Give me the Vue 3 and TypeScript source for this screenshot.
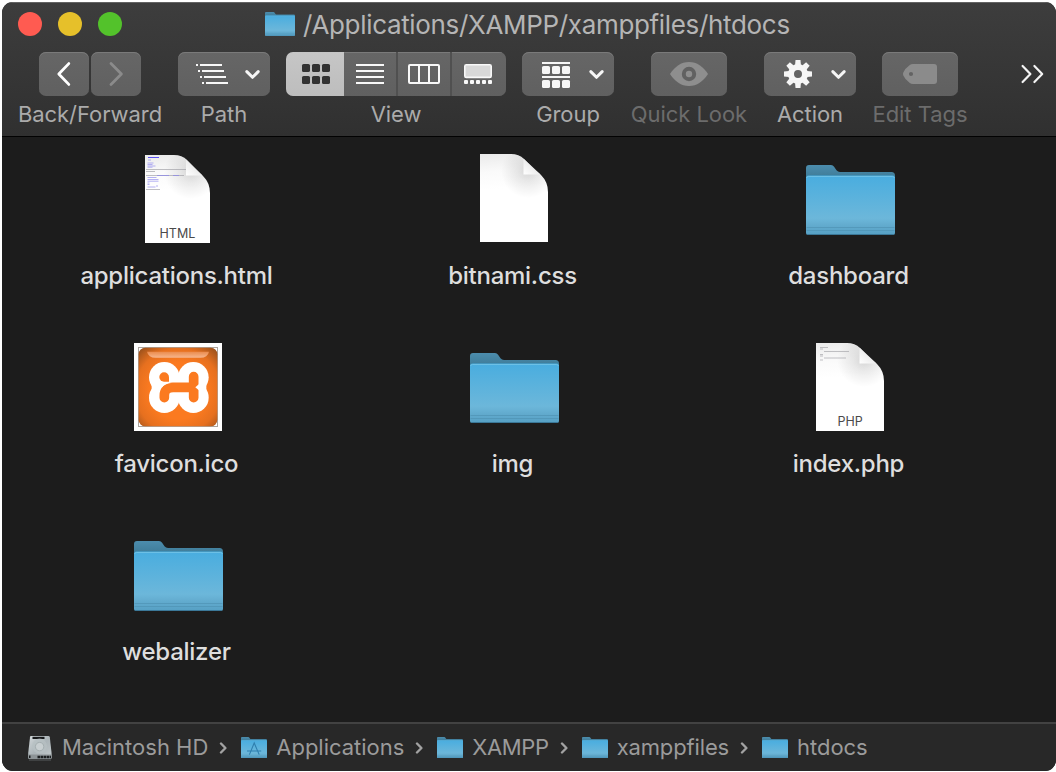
<script setup lang="ts">
import { h, type FunctionalComponent } from 'vue'

interface Entry { name: string; kind: 'html' | 'css' | 'php' | 'folder' | 'ico' }
interface Crumb { name: string; icon: 'disk' | 'apps' | 'folder'; cls: string }

const entries: Entry[] = [
  { name: 'applications.html', kind: 'html' },
  { name: 'bitnami.css', kind: 'css' },
  { name: 'dashboard', kind: 'folder' },
  { name: 'favicon.ico', kind: 'ico' },
  { name: 'img', kind: 'folder' },
  { name: 'index.php', kind: 'php' },
  { name: 'webalizer', kind: 'folder' },
]

const crumbs: Crumb[] = [
  { name: 'Macintosh HD', icon: 'disk', cls: 'c-disk' },
  { name: 'Applications', icon: 'apps', cls: 'c-apps' },
  { name: 'XAMPP', icon: 'folder', cls: 'c-xampp' },
  { name: 'xamppfiles', icon: 'folder', cls: 'c-files' },
  { name: 'htdocs', icon: 'folder', cls: 'c-htdocs' },
]

const teeth = [0, 45, 90, 135, 180, 225, 270, 315]

const Chevron: FunctionalComponent = () =>
  h('path', {
    d: 'M68.8 19.6L74.5 25.3L80.2 19.6',
    fill: 'none',
    stroke: '#f6f6f6',
    'stroke-width': 3,
    'stroke-linecap': 'round',
    'stroke-linejoin': 'round',
  })
</script>

<template>
  <div class="window">
    <svg class="defs" width="0" height="0">
      <defs>
        <linearGradient id="front" x1="0" y1="0" x2="0" y2="1">
          <stop offset="0" stop-color="#49addf" />
          <stop offset="0.72" stop-color="#6cb7da" />
          <stop offset="0.84" stop-color="#62abce" />
          <stop offset="1" stop-color="#56a0c4" />
        </linearGradient>
        <linearGradient id="back" x1="0" y1="0" x2="0" y2="1">
          <stop offset="0" stop-color="#4c8dad" />
          <stop offset="0.6" stop-color="#3f7c99" />
        </linearGradient>
        <linearGradient id="sheet" x1="0.2" y1="0" x2="0.25" y2="1">
          <stop offset="0" stop-color="#ebebeb" />
          <stop offset="0.2" stop-color="#fafafa" />
          <stop offset="0.4" stop-color="#ffffff" />
        </linearGradient>
        <radialGradient id="shade" gradientUnits="userSpaceOnUse" cx="48" cy="17" r="27">
          <stop offset="0" stop-color="#000" stop-opacity="0.15" />
          <stop offset="0.4" stop-color="#000" stop-opacity="0.08" />
          <stop offset="1" stop-color="#000" stop-opacity="0" />
        </radialGradient>
        <linearGradient id="curl" x1="0" y1="1" x2="0.6" y2="0.4">
          <stop offset="0" stop-color="#ffffff" />
          <stop offset="1" stop-color="#e9e9e9" />
        </linearGradient>
        <radialGradient id="tile" cx="0.5" cy="0.55" r="0.72">
          <stop offset="0.5" stop-color="#fb7a20" />
          <stop offset="0.75" stop-color="#e6701f" />
          <stop offset="1" stop-color="#98501c" />
        </radialGradient>
        <linearGradient id="gloss" x1="0" y1="0" x2="0" y2="1">
          <stop offset="0" stop-color="#eb8b4c" />
          <stop offset="1" stop-color="#f6b58c" />
        </linearGradient>
        <linearGradient id="metal" x1="0" y1="0" x2="1" y2="1">
          <stop offset="0" stop-color="#d2d8da" />
          <stop offset="0.5" stop-color="#abb4b8" />
          <stop offset="1" stop-color="#c3cacc" />
        </linearGradient>
        <symbol id="folder" viewBox="0.5 0.5 89 70" preserveAspectRatio="none">
          <path d="M0.5 12V3.5Q0.5 0.5 3.5 0.5H25.5Q27.5 0.5 28.6 2.2L31 5.8Q32.3 7.5 34.5 7.5H86Q89.5 7.5 89.5 11V20H0.5Z" fill="url(#back)" />
          <path d="M0.5 13.5Q0.5 11 3 11H87Q89.5 11 89.5 13.5V68.5Q89.5 70.5 87.5 70.5H2.5Q0.5 70.5 0.5 68.5Z" fill="url(#front)" />
          <path d="M1.2 13.5Q1.2 12 3 12H87Q88.8 12 88.8 13.5" fill="none" stroke="#6cc0e6" stroke-width="1" />
          <path d="M1 63H89M1 66H89" stroke="#4f93b4" stroke-width="1" opacity="0.7" />
          <path d="M1.5 70H88.5" stroke="#3b7898" stroke-width="1" />
        </symbol>
      </defs>
    </svg>

    <header class="header">
      <div class="titlebar">
        <div class="lights"><i class="red" /><i class="yellow" /><i class="green" /></div>
        <div class="title">
          <svg width="30" height="24"><use href="#folder" width="30" height="24" /></svg>
          <span>/Applications/XAMPP/xamppfiles/htdocs</span>
        </div>
      </div>

      <div class="toolbar">
        <div class="tool w-nav">
          <div class="pair">
            <button class="btn">
              <svg width="50" height="44"><path d="M29.8 11.6L19.8 22L29.8 32.4" class="nav" /></svg>
            </button>
            <button class="btn">
              <svg width="50" height="44"><path d="M20 11.6L30.4 22L20 32.4" class="nav off" /></svg>
            </button>
          </div>
          <span>Back/Forward</span>
        </div>

        <div class="tool w-menu">
          <button class="btn">
            <svg width="92" height="44">
              <path d="M18 13h2M22 13h22M20 19h2M24 19h22M22 25h2M26 25h22M24 31h2M28 31h22" stroke="#f8f8f8" stroke-width="2" />
              <Chevron />
            </svg>
          </button>
          <span>Path</span>
        </div>

        <div class="tool w-view">
          <div class="segments">
            <button class="seg selected">
              <svg width="58" height="44" fill="#333">
                <rect v-for="n in 6" :key="n" :x="16 + ((n - 1) % 3) * 10" :y="n > 3 ? 24 : 12" width="8" height="8" rx="1.6" />
              </svg>
            </button>
            <button class="seg">
              <svg width="52" height="44"><path d="M12 13h28M12 19h28M12 25h28M12 31h28" stroke="#f8f8f8" stroke-width="2" /></svg>
            </button>
            <button class="seg">
              <svg width="52" height="44">
                <rect x="11" y="13" width="30" height="18" rx="1" fill="none" stroke="#f8f8f8" stroke-width="2" />
                <path d="M21 13v18M31 13v18" stroke="#f8f8f8" stroke-width="2" />
              </svg>
            </button>
            <button class="seg">
              <svg width="54" height="44" fill="#f8f8f8">
                <rect x="12.8" y="12.8" width="26.4" height="12.6" rx="1.5" fill="#d8d8d8" stroke="#f8f8f8" stroke-width="1.6" />
                <rect v-for="n in 5" :key="n" :x="6 + n * 6" y="28" width="4" height="4" rx="1" />
              </svg>
            </button>
          </div>
          <span>View</span>
        </div>

        <div class="tool w-menu">
          <button class="btn">
            <svg width="92" height="44" fill="#f6f6f6">
              <rect x="20" y="10" width="28" height="2" />
              <rect v-for="n in 6" :key="n" :x="20 + ((n - 1) % 3) * 10" :y="n > 3 ? 28 : 14" width="8" height="8" rx="1.6" />
              <rect x="20" y="24" width="28" height="2" />
              <Chevron />
            </svg>
          </button>
          <span>Group</span>
        </div>

        <div class="tool w-look dim">
          <button class="btn">
            <svg width="76" height="44">
              <path d="M19 22C24 14.5 30 10 38 10S52 14.5 57 22C52 29.5 46 34 38 34S24 29.5 19 22Z" fill="#8e8e8e" />
              <circle cx="38" cy="22" r="5.2" fill="none" stroke="#616161" stroke-width="4" />
            </svg>
          </button>
          <span>Quick Look</span>
        </div>

        <div class="tool w-menu">
          <button class="btn">
            <svg width="92" height="44">
              <g transform="translate(34 22)" fill="#f6f6f6">
                <circle r="7" fill="none" stroke="#f6f6f6" stroke-width="6" />
                <path v-for="a in teeth" :key="a" :transform="`rotate(${a})`" d="M-2.9 -9L-2.5 -14H2.5L2.9 -9Z" />
              </g>
              <Chevron />
            </svg>
          </button>
          <span>Action</span>
        </div>

        <div class="tool w-tags dim">
          <button class="btn">
            <svg width="76" height="44">
              <path fill-rule="evenodd" d="M31 12H52Q55 12 55 15V29Q55 32 52 32H31Q29 32 27.5 30.8Q23 27.5 21.3 23.6Q20.7 22 21.3 20.4Q23 16.5 27.5 13.2Q29 12 31 12ZM29 19.9A2.1 2.1 0 1 0 29 24.1A2.1 2.1 0 1 0 29 19.9Z" fill="#8b8b8b" />
            </svg>
          </button>
          <span>Edit Tags</span>
        </div>

        <svg class="more" width="26" height="44">
          <path d="M3.6 14L11.4 22L3.6 30M15.4 14L23.2 22L15.4 30" fill="none" stroke="#f4f4f4" stroke-width="2.2" stroke-linecap="round" stroke-linejoin="round" />
        </svg>
      </div>
    </header>

    <main class="files">
      <div v-for="e in entries" :key="e.name" class="file">
        <div class="art" :class="e.kind">
          <svg v-if="e.kind === 'folder'" width="89" height="70"><use href="#folder" width="89" height="70" /></svg>

          <svg v-else-if="e.kind === 'ico'" width="88" height="88" viewBox="27 24 264 264">
            <rect x="27" y="24" width="264" height="264" fill="#fff" />
            <rect x="39" y="36" width="240" height="240" fill="#aaa49e" />
            <path d="M42 39H58Q46 42 42 56ZM276 39H260Q272 42 276 56ZM42 273H58Q46 270 42 258ZM276 273H260Q272 270 276 258Z" fill="#fff" />
            <rect x="41" y="38" width="236" height="236" rx="20" fill="url(#tile)" />
            <path d="M66 50H252Q248 68 226 68H92Q70 68 66 50Z" fill="url(#gloss)" />
            <g fill="#fff">
              <circle cx="118" cy="127" r="46" />
              <circle cx="205" cy="127" r="46" />
              <circle cx="118" cy="188" r="46" />
              <circle cx="205" cy="188" r="46" />
              <rect x="80" y="124" width="164" height="66" />
            </g>
            <path d="M118 188V182Q118 158 144 157H206M206 125V188" fill="none" stroke="#fb7a20" stroke-width="29" stroke-linecap="round" />
            <path d="M117 112A15 15 0 0 1 132 127V140H117A14 14 0 0 1 117 112Z" fill="#fb7a20" />
            <path d="M104 146Q112 142 132 142L138 144Q120 146 110 158Z" fill="#fff" />
            <path d="M225 145L211 157L225 169Z" fill="#fff" />
          </svg>

          <svg v-else-if="e.kind === 'html'" width="65" height="88">
            <path d="M0 0H29Q37 0 42 5L58 21Q65 28 65 38V88H0Z" fill="url(#sheet)" />
            <path d="M2 0H31Q39 0 44 5L60 21Q67 28 67 38V88H2Z" fill="url(#shade)" transform="translate(-2 0)" />
            <path d="M41 4.5V20.5H57.5Q54 17.5 50 13.5Z" fill="url(#curl)" />
            <path d="M3 2.5h11" stroke="#5c52f0" stroke-width="1.2" />
            <path d="M3 5h3M2.5 8h6M2.5 9.5h5M2.5 11h8M2.5 12.2h5M2.5 22.5h9M2.5 24.5h11M2.5 26.2h11M2.5 28h2M2.5 29.5h2M2.5 32h8M11 31h2" stroke="#a19df0" stroke-width="0.8" />
            <path d="M1 14.5h40M1 16.5h9M1 20.5h38M1 34.5h14" stroke="#a2a2a8" stroke-width="0.7" />
            <path d="M12 20.5h12M28 20.5h6" stroke="#8884e8" stroke-width="0.7" />
            <text x="32.4" y="83" class="ext">HTML</text>
          </svg>

          <svg v-else width="68" height="88">
            <path d="M0 0H31Q39 0 44 5L61 21Q68 28 68 38V88H0Z" fill="url(#sheet)" />
            <path d="M0 0H31Q39 0 44 5L61 21Q68 28 68 38V88H0Z" fill="url(#shade)" />
            <path d="M43.5 4.5V20.5H60.5Q56 17 52 13Z" fill="url(#curl)" />
            <template v-if="e.kind === 'php'">
              <path d="M4 4.5h8M4 6h3M8 8.5h25M4 11.5h3M4 13h3M8 15h22M4 17h3" stroke="#a8a8ac" stroke-width="0.7" />
              <text x="34.2" y="83" class="ext">PHP</text>
            </template>
          </svg>
        </div>
        <span class="name">{{ e.name }}</span>
      </div>
    </main>

    <footer class="pathbar">
      <template v-for="(c, i) in crumbs" :key="c.name">
        <svg v-if="i" class="sep" width="8" height="12"><path d="M2 1.5L6.4 6L2 10.5" fill="none" stroke="#a2a2a2" stroke-width="2.4" stroke-linecap="round" stroke-linejoin="round" /></svg>
        <div class="crumb">
          <svg v-if="c.icon === 'disk'" width="26" height="26">
            <path d="M3.5 1H21.5Q22.6 1 22.8 2.2L24.6 18V22.5Q24.6 24 23 24H2.8Q1.2 24 1.2 22.5V18L3 2.2Q3.2 1 3.5 1Z" fill="url(#metal)" />
            <rect x="5.5" y="1.8" width="12" height="2.2" fill="#16181a" />
            <circle cx="12.6" cy="11" r="7.4" fill="#b7c0c3" opacity="0.75" />
            <circle cx="12.6" cy="11.6" r="4.2" fill="#c8cfd1" stroke="#a2abae" stroke-width="0.9" />
            <path d="M1.2 19.5H24.6V22.5Q24.6 24 23 24H2.8Q1.2 24 1.2 22.5Z" fill="#8d9497" />
            <path d="M2 21.8H3.5M10.5 22H24" stroke="#1c1f21" stroke-width="2.4" stroke-dasharray="2.6 0.5" />
            <path d="M2 25H24" stroke="#565a5c" stroke-width="1.2" />
          </svg>
          <svg v-else width="26" height="21">
            <use href="#folder" width="26" height="21" />
            <path v-if="c.icon === 'apps'" d="M8.4 17.6L13.2 6L18.2 17.6M6 14H20.2" fill="none" stroke="#2f7fae" stroke-width="1.1" />
          </svg>
          <span :class="c.cls">{{ c.name }}</span>
        </div>
      </template>
    </footer>
  </div>
</template>

<style>
body { background: #fff; }
</style>

<style scoped>
.window {
  box-sizing: border-box;
  width: 1054px;
  height: 769px;
  margin: 2px 0 0 2px;
  border-radius: 11px;
  overflow: hidden;
  background: #1c1c1c;
  font-family: Inter, "Liberation Sans", sans-serif;
  display: flex;
  flex-direction: column;
}
.defs { position: absolute; }
svg { display: block; flex: none; }
button { border: 0; padding: 0; margin: 0; font: inherit; }
.header {
  box-sizing: border-box;
  height: 135px;
  flex: none;
  border-top: 1px solid #636363;
  border-bottom: 1px solid #020202;
  background: linear-gradient(#3d3d3d, #303030);
}
.titlebar {
  height: 49px;
  display: grid;
  grid-template-columns: 247px 1fr;
  padding-left: 16px;
}
.lights { display: flex; gap: 16px; padding-top: 9px; }
.lights i { width: 24px; height: 24px; border-radius: 50%; }
.red { background: #ff5b51; }
.yellow { background: #e6c02a; }
.green { background: #53c22b; }
.title { display: flex; gap: 8px; height: 24px; padding-top: 9px; align-items: center; color: #b5b5b5; font-size: 26px; letter-spacing: -0.33px; white-space: nowrap; }
.toolbar { display: flex; gap: 16px; padding: 0 11px 0 16px; }
.tool { flex: none; display: flex; flex-direction: column; align-items: center; }
.tool > span { height: 36px; line-height: 36px; font-size: 22px; letter-spacing: -0.06px; color: #ababab; white-space: nowrap; }
.tool.dim > span { color: #6c6c6c; }
.w-nav { width: 144px; }
.w-menu { width: 92px; }
.w-view { width: 220px; }
.w-look { width: 118px; }
.w-tags { width: 96px; }
.pair { display: flex; gap: 2px; }
.btn {
  border-radius: 7px;
  overflow: hidden;
  background: linear-gradient(#666, #606060);
  box-shadow: inset 0 1px 0 #7a7a7a;
}
.segments { display: flex; gap: 2px; background: #505050; border-radius: 7px; overflow: hidden; }
.seg { background: linear-gradient(#666, #606060); box-shadow: inset 0 1px 0 #7a7a7a; }
.seg.selected { background: linear-gradient(#c6c6c6, #bdbdbd); box-shadow: none; margin-right: -2px; }
.nav { fill: none; stroke: #fff; stroke-width: 2.8; stroke-linecap: round; stroke-linejoin: round; }
.nav.off { stroke: #8b8b8b; }
.more { margin-left: auto; }
.files {
  flex: 1;
  display: grid;
  grid-template-columns: repeat(3, 336px);
  grid-auto-rows: 188px;
  align-content: start;
  padding: 17px 0 0 7px;
}
.file { display: flex; flex-direction: column; align-items: center; }
.art { box-sizing: border-box; width: 92px; height: 90px; margin-left: 2px; display: flex; align-items: center; justify-content: center; }
.art.folder { padding: 2px 0 0 1px; }
.art.css { padding-bottom: 2px; }
.art.html { padding-right: 1px; }
.name { margin-top: 15px; line-height: 34px; font-size: 24px; font-weight: 500; letter-spacing: -0.25px; color: #dedede; white-space: nowrap; margin-right: 1px; }
.ext { font-size: 12.5px; fill: #4a4a4a; text-anchor: middle; font-family: Inter, sans-serif; }
.pathbar {
  box-sizing: border-box;
  height: 49px;
  flex: none;
  display: flex;
  align-items: center;
  border-top: 2px solid #424242;
  background: #282828;
  padding-left: 25px;
}
.sep { margin: 0 14px 0 11px; }
.crumb { display: flex; align-items: center; gap: 9px; font-size: 22px; color: #9b9b9b; white-space: nowrap; }
.crumb span { line-height: 26px; padding-bottom: 2px; }
.c-apps { letter-spacing: -0.03px; }
.c-xampp { letter-spacing: -0.35px; }
.c-files { letter-spacing: -0.14px; }
.c-htdocs { letter-spacing: -0.05px; }
</style>
